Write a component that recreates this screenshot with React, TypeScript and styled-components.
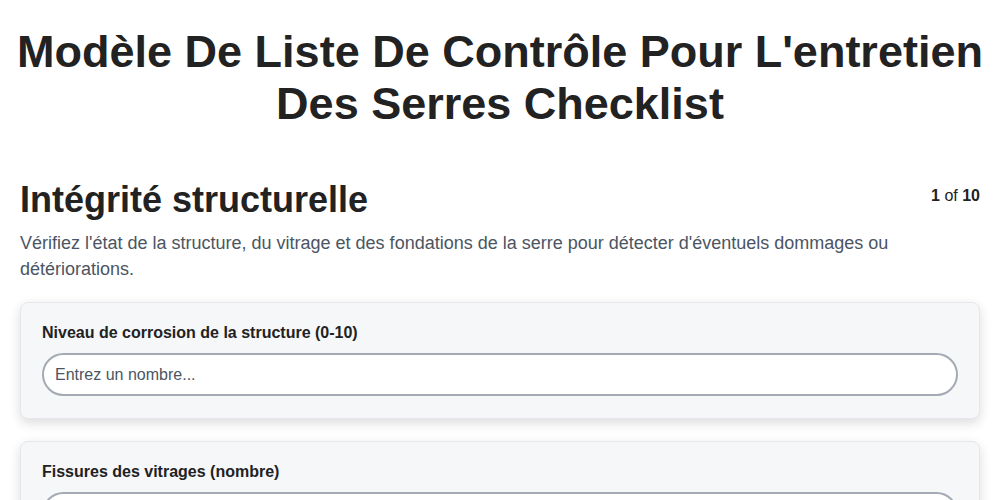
import styled, { createGlobalStyle } from "styled-components";

const GlobalStyle = createGlobalStyle`
  body {
    margin: 0;
    background: #ffffff;
    font-family: "Liberation Sans", Arial, sans-serif;
    color: #1f2937;
  }
`;

const Page = styled.div`
  padding: 26px 0;
`;

const Header = styled.header`
  padding: 0 8px;
  margin-bottom: 48px;
`;

const Title = styled.h1`
  margin: 0;
  text-align: center;
  font-size: 45px;
  line-height: 52px;
  font-weight: 700;
  color: #222222;
`;

const Content = styled.main`
  padding: 0 20px;
`;

const SectionHeader = styled.div`
  display: flex;
  justify-content: space-between;
  align-items: flex-start;
`;

const SectionTitle = styled.h2`
  margin: 0;
  font-size: 36px;
  line-height: 44px;
  font-weight: 700;
  color: #222222;
`;

const Counter = styled.div`
  font-size: 16px;
  line-height: 24px;
  padding-top: 6px;
  color: #222222;
  b {
    font-weight: 700;
  }
`;

const Description = styled.p`
  margin: 8px 0 20px;
  font-size: 18px;
  line-height: 26px;
  color: #4b5563;
`;

const Card = styled.div`
  background: #f6f7f9;
  border: 1px solid #e5e7eb;
  border-radius: 8px;
  box-shadow: 0 4px 12px rgba(0, 0, 0, 0.14);
  padding: 20px 21px 22px;
  margin-bottom: 22px;
`;

const Label = styled.label`
  display: block;
  font-size: 16px;
  font-weight: 700;
  line-height: 20px;
  margin-bottom: 10px;
  color: #222222;
`;

const Input = styled.input`
  box-sizing: border-box;
  width: 100%;
  height: 43px;
  border: 2px solid #a3aab3;
  border-radius: 9999px;
  background: #ffffff;
  padding: 0 11px;
  font-family: "Liberation Sans", Arial, sans-serif;
  font-size: 16px;
  color: #1f2937;
  outline: none;
  &::placeholder {
    color: #4b5563;
  }
`;

const fields = [
  "Niveau de corrosion de la structure (0-10)",
  "Fissures des vitrages (nombre)",
];

export default function App() {
  return (
    <>
      <GlobalStyle />
      <Page>
        <Header>
          <Title>
            Modèle De Liste De Contrôle Pour L'entretien Des Serres Checklist
          </Title>
        </Header>
        <Content>
          <SectionHeader>
            <SectionTitle>Intégrité structurelle</SectionTitle>
            <Counter>
              <b>1</b> of <b>10</b>
            </Counter>
          </SectionHeader>
          <Description>
            Vérifiez l'état de la structure, du vitrage et des fondations de
            la serre pour détecter d'éventuels dommages ou détériorations.
          </Description>
          {fields.map((f) => (
            <Card key={f}>
              <Label>{f}</Label>
              <Input type="number" placeholder="Entrez un nombre..." />
            </Card>
          ))}
        </Content>
      </Page>
    </>
  );
}
